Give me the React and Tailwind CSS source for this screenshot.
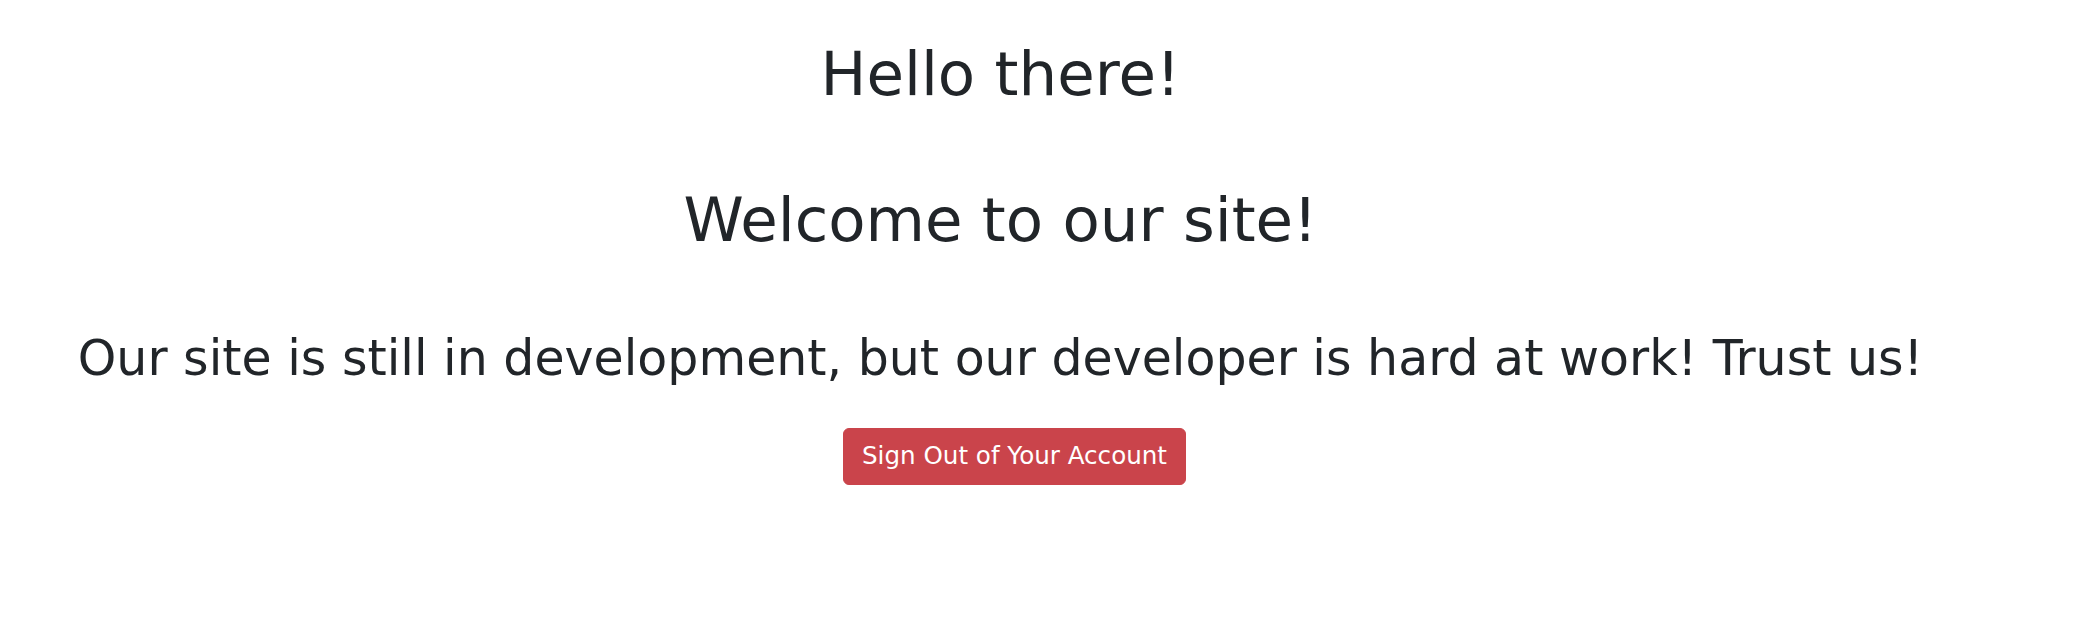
export default function App() {
  return (
    <div className="w-[2001px] pt-[38px] text-center text-[#212529] font-['DejaVu_Sans',sans-serif]">
      <h1 className="text-[61px] leading-[72px] font-normal">Hello there!</h1>
      <h1 className="mt-[74px] text-[61px] leading-[72px] font-normal">Welcome to our site!</h1>
      <h2 className="mt-[74px] text-[49px] leading-[58px] font-normal">
        Our site is still in development, but our developer is hard at work! Trust us!
      </h2>
      <div className="mt-[40px]">
        <button className="ml-[28px] inline-block rounded-[6px] border-[1.5px] border-[#ca444b] bg-[#ca444b] px-[18px] pt-[9px] pb-[9.5px] text-[24.6px] leading-[36px] text-white">
          Sign Out of Your Account
        </button>
      </div>
    </div>
  );
}
